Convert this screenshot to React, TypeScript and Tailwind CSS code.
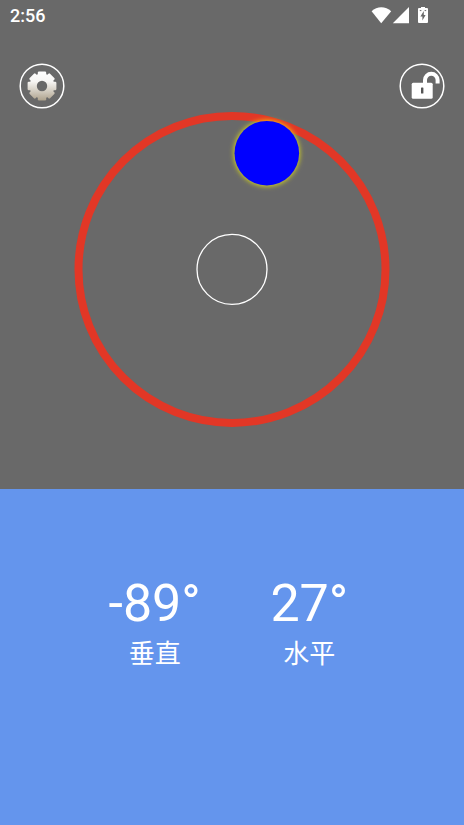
import * as React from "react";

const TOOTH_ANGLES = [0, 45, 90, 135, 180, 225, 270, 315];

const readings = [
  { label: "垂直", value: -89 },
  { label: "水平", value: 27 },
];

function StatusBar() {
  return (
    <div className="flex h-8 items-center justify-between pl-[10px] pr-[35px] text-lg font-medium">
      <time>2:56</time>
      <svg width="58" height="18" viewBox="0 0 58 18" fill="#fff" aria-hidden="true">
        <path d="M10.2 16.2 L0.6 4.2 C6 -1 14.6 -1 20.2 4.2 Z" />
        <path d="M38 0 V16.2 H21.8 Z" />
        <path
          fillRule="evenodd"
          d="M50 -0.6 h4 v1.5 h2 a1 1 0 0 1 1 1 V15 a1 1 0 0 1 -1 1 h-8 a1 1 0 0 1 -1 -1 V1.9 a1 1 0 0 1 1 -1 h2 Z M52.8 4 L49.4 9.4 h2 v4 L54.6 8 h-1.8 Z"
        />
        <path d="M48.8 3.6 h1.6 M53.6 3.6 h1.6" stroke="#696969" strokeWidth="1" />
      </svg>
    </div>
  );
}

function GearIcon() {
  return (
    <svg width="46" height="46" viewBox="0 0 46 46" aria-hidden="true">
      <defs>
        <linearGradient id="gear-fill" x1="0" y1="0" x2="0" y2="1">
          <stop offset="0" stopColor="#ffffff" />
          <stop offset="0.35" stopColor="#f7f6f4" />
          <stop offset="1" stopColor="#aca08a" />
        </linearGradient>
        <mask id="gear-shape">
          <circle cx="23" cy="23" r="12.4" fill="#fff" />
          {TOOTH_ANGLES.map((a) => (
            <rect
              key={a}
              x="18.8"
              y="8.6"
              width="8.4"
              height="8"
              rx="1.2"
              fill="#fff"
              transform={`rotate(${a} 23 23)`}
            />
          ))}
          <circle cx="23" cy="23" r="5.2" fill="#000" />
        </mask>
      </defs>
      <circle cx="23" cy="23" r="21.8" fill="none" stroke="#fff" strokeWidth="1.5" />
      <rect x="8" y="8" width="30" height="30" fill="url(#gear-fill)" mask="url(#gear-shape)" />
    </svg>
  );
}

function LockIcon({ locked }: { locked: boolean }) {
  return (
    <svg width="46" height="46" viewBox="0 0 46 46" aria-hidden="true">
      <circle cx="23" cy="23" r="21.8" fill="none" stroke="#fff" strokeWidth="1.5" />
      <path
        d={locked ? "M17 21 V17 a6 6 0 0 1 12 0 V21" : "M26 21 V17 a6.3 6.3 0 0 1 12.6 0 V20.6"}
        fill="none"
        stroke="#fff"
        strokeWidth="4"
      />
      <rect x="12.7" y="19.8" width="21" height="16" rx="1.5" fill="#fff" />
      <rect x="22" y="24.5" width="2.4" height="6" rx="0.6" fill="#555" />
    </svg>
  );
}

function Dial() {
  return (
    <svg viewBox="0 0 316 316" className="mx-auto w-[316px] max-w-full overflow-visible" role="img" aria-label="水平仪">
      <defs>
        <filter id="ball-glow" x="-30%" y="-30%" width="160%" height="160%">
          <feGaussianBlur stdDeviation="2.4" />
        </filter>
      </defs>
      <circle cx="158" cy="158.4" r="153.5" fill="none" stroke="#e23726" strokeWidth="8" />
      <circle cx="158" cy="158.4" r="35" fill="none" stroke="#fff" strokeWidth="1.3" />
      <circle cx="192.8" cy="42.2" r="33" fill="#ffff00" fillOpacity="0.75" filter="url(#ball-glow)" />
      <circle cx="192.8" cy="42.2" r="32.3" fill="#0000ff" />
    </svg>
  );
}

export default function App() {
  const [locked, setLocked] = React.useState(false);

  return (
    <div className="flex min-h-screen flex-col bg-[#6495ed] font-['Roboto','Noto_Sans_CJK_SC',sans-serif] text-white">
      <header className="bg-[#696969]">
        <StatusBar />
      </header>

      <main className="flex flex-1 flex-col">
        <section className="bg-[#696969] pb-[62px] pt-[31px]">
          <div className="flex justify-between px-[19px]">
            <button type="button" aria-label="设置" className="rounded-full">
              <GearIcon />
            </button>
            <button
              type="button"
              aria-label="锁定"
              aria-pressed={locked}
              onClick={() => setLocked(!locked)}
              className="rounded-full"
            >
              <LockIcon locked={locked} />
            </button>
          </div>
          <div className="pt-0.5">
            <Dial />
          </div>
        </section>

        <section className="flex-1 pt-[85px]">
          <dl className="mx-auto grid w-2/3 grid-cols-2 text-center">
            {readings.map((r) => (
              <div key={r.label} className="flex flex-col-reverse">
                <dt className="text-[26px] leading-[40px]">{r.label}</dt>
                <dd className="text-[52px] leading-[60px]">{r.value}°</dd>
              </div>
            ))}
          </dl>
        </section>
      </main>
    </div>
  );
}
